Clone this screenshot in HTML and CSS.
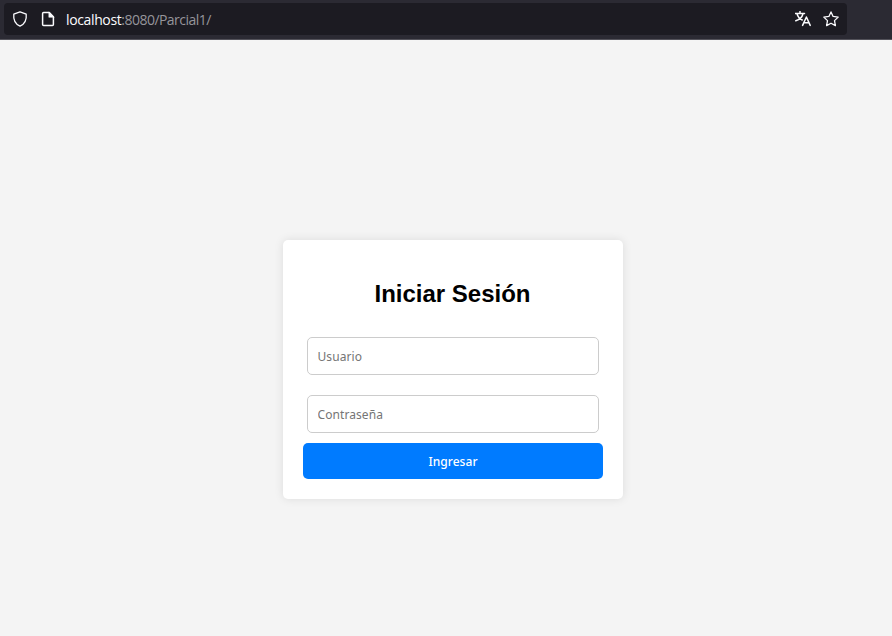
FILE: index.html
```html
<!DOCTYPE html>
<html lang="es">
<head>
<meta charset="utf-8">
<title>Iniciar Sesión</title>
<link rel="stylesheet" href="styles.css">
</head>
<body>
<header class="toolbar">
  <div class="urlbar">
    <svg class="icon shield" viewBox="0 0 16 16"><path d="M8 .8 14.200 3.100c.4 3.600-.3 9.300-6.200 12.100C2.100 12.400 1.400 6.700 1.800 3.100Z"/></svg>
    <svg class="icon page" viewBox="0 0 16 16"><path d="M3.600 1.600h5.700l4.100 4.100v7.700a1 1 0 0 1-1 1H3.600a1 1 0 0 1-1-1V2.600a1 1 0 0 1 1-1Z"/><path class="fold" d="M8.800 1.300v5h5Z"/></svg>
    <div class="url"><span class="host">localhost</span><span class="path">:8080/Parcial1/</span></div>
    <svg class="icon translate" viewBox="0 0 16 16"><path d="M.3 2.500h9.200M5 .5v2M2 2.800c.8 3 3 5.200 5.200 6.200M8 2.800C7.200 6 4.200 8.800.8 9.800M7.600 14.400 11.400 6l3.800 8.400M9 11.700h4.800"/></svg>
    <svg class="icon star" viewBox="0 0 16 16"><path d="m8 .9 2.100 4.500 5.100.7-3.700 3.500.9 5L8 12.200l-4.400 2.400.9-5L.8 6.100l5.100-.7Z"/></svg>
  </div>
</header>
<main class="page-area">
  <form class="card">
    <h2 class="title">Iniciar Sesión</h2>
    <input class="field" type="text" placeholder="Usuario">
    <input class="field" type="password" placeholder="Contraseña">
    <button class="submit" type="button">Ingresar</button>
  </form>
</main>
</body>
</html>
```
FILE: styles.css
```css
* { box-sizing: border-box; }
body {
  margin: 0;
  height: 636px;
  overflow: hidden;
  display: flex;
  flex-direction: column;
  background: #f4f4f4;
  font-family: "Liberation Sans", Arial, sans-serif;
}
.toolbar {
  height: 40px;
  flex: none;
  padding: 3px 45px 0 4px;
  background: #2b2a33;
  border-bottom: 1px solid #53525a;
}
.urlbar {
  height: 32px;
  display: flex;
  align-items: center;
  padding: 0 8px;
  border-radius: 4px;
  background: #1c1b22;
}
.icon {
  width: 16px;
  height: 16px;
  flex: none;
  fill: none;
  stroke: #fbfbfe;
  stroke-width: 1.3;
  stroke-linejoin: round;
  stroke-linecap: round;
}
.page { margin-left: 12px; stroke-width: 1.5; }
.fold { fill: #fbfbfe; stroke-width: .5; }
.url {
  flex: 1;
  margin-left: 10px;
  padding-top: 2px;
  font: 14px/20px "Open Sans", sans-serif;
  white-space: nowrap;
}
.host { color: #fbfbfe; letter-spacing: -.37px; }
.path { color: #96959b; letter-spacing: -.53px; }
.translate { stroke-width: 1.5; }
.star { margin-left: 12px; }
.page-area {
  flex: 1;
  display: flex;
  justify-content: center;
  align-items: flex-start;
  padding: 200px 0 0 14px;
}
.card {
  width: 340px;
  height: 259px;
  padding: 20px;
  display: flex;
  flex-direction: column;
  align-items: center;
  border-radius: 5px;
  background: #fff;
  box-shadow: 0 0 10px rgba(0, 0, 0, .1);
}
.title {
  margin: 20px 0;
  padding-right: 1px;
  height: 27px;
  font-size: 24px;
  line-height: 27px;
  color: #000;
}
.field {
  width: 292px;
  height: 38px;
  margin: 10px 0;
  padding: 1px 10px 0 9.5px;
  border: 1px solid #ccc;
  border-radius: 5px;
  background: #fff;
  font: 12px "Noto Sans", sans-serif;
  letter-spacing: .08px;
}
.field::placeholder { color: #757575; opacity: 1; }
.submit {
  width: 300px;
  height: 36px;
  flex: none;
  padding: 1px 0 0;
  border: 0;
  border-radius: 5px;
  background: #007bff;
  color: #fff;
  font: 500 12px "Noto Sans", sans-serif;
  letter-spacing: .05px;
}
```
